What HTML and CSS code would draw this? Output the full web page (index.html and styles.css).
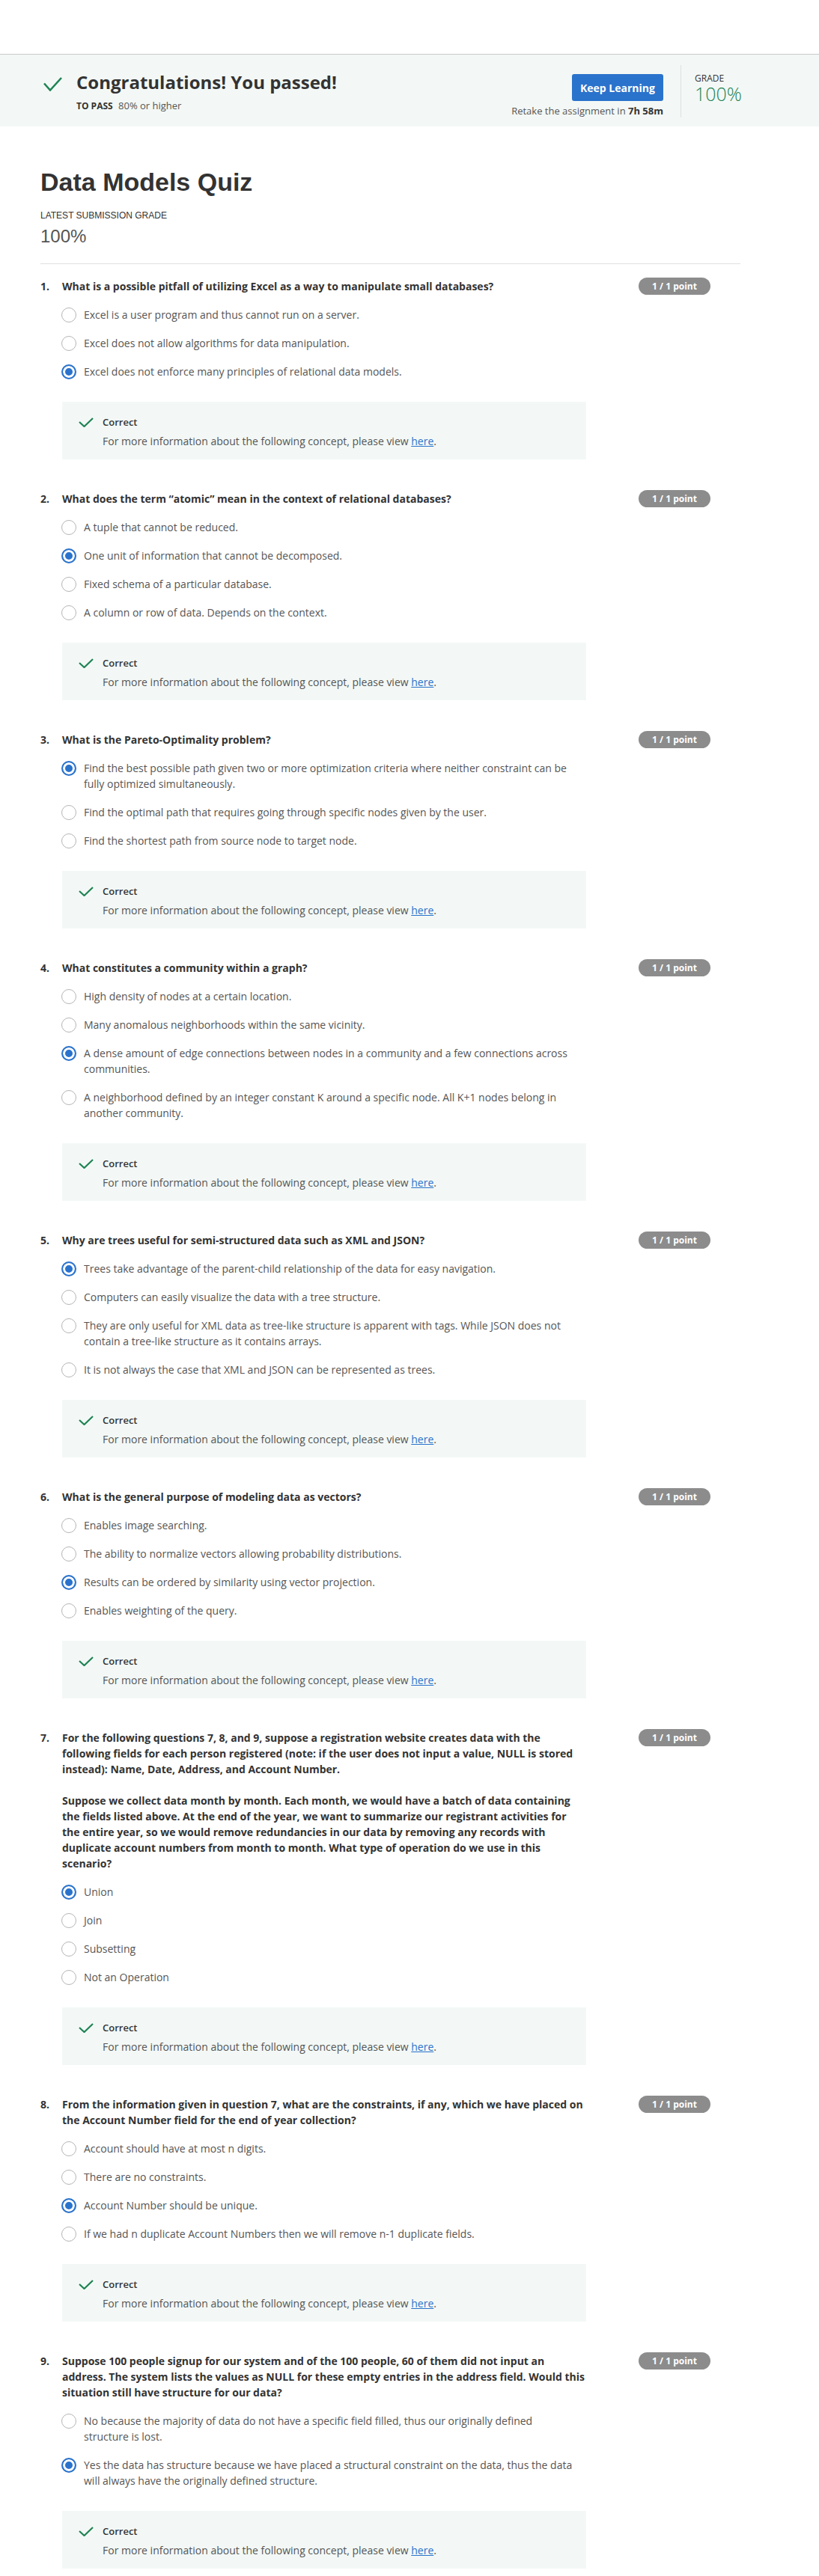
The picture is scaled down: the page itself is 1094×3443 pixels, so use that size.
FILE: index.html
```html
<!DOCTYPE html>
<html lang="en">
<head>
<meta charset="utf-8">
<title>Data Models Quiz</title>
<link rel="stylesheet" href="styles.css">
</head>
<body>
<div class="topbar"></div>
<div class="banner">
  <div class="banner-main">
    <svg class="banner-check" width="25" height="19" viewBox="0 0 25 19"><path d="M1 8.5 L9 17.5 L24 1" fill="none" stroke="#1f8354" stroke-width="2.6"/></svg>
    <div>
      <h2 class="banner-title">Congratulations! You passed!</h2>
      <div class="pass"><b>TO PASS</b> 80% or higher</div>
    </div>
  </div>
  <div class="actions">
    <button class="btn">Keep Learning</button>
    <div class="retake">Retake the assignment in <b>7h 58m</b></div>
  </div>
  <div class="grade">
    <div class="grade-label">GRADE</div>
    <div class="grade-value">100%</div>
  </div>
</div>

<main class="content">
  <h1 class="title">Data Models Quiz</h1>
  <div class="latest-label">LATEST SUBMISSION GRADE</div>
  <div class="latest-value">100%</div>
  <div class="divider"></div>

  <section class="question">
    <div class="q-head">
      <span class="q-num">1.</span>
      <div class="q-text">What is a possible pitfall of utilizing Excel as a way to manipulate small databases?</div>
      <span class="badge">1 / 1 point</span>
    </div>
    <ul class="options">
      <li class="option"><span class="radio"></span><span class="opt-text">Excel is a user program and thus cannot run on a server.</span></li>
      <li class="option"><span class="radio"></span><span class="opt-text">Excel does not allow algorithms for data manipulation.</span></li>
      <li class="option"><span class="radio checked"></span><span class="opt-text">Excel does not enforce many principles of relational data models.</span></li>
    </ul>
    <div class="feedback">
      <svg class="fb-check" width="20" height="13" viewBox="0 0 20 13"><path d="M1 6 L7.5 12 L19 1" fill="none" stroke="#1f8354" stroke-width="2.2"/></svg>
      <div>
        <div class="fb-title">Correct</div>
        <div class="fb-text">For more information about the following concept, please view <a href="#">here</a>.</div>
      </div>
    </div>
  </section>

  <section class="question">
    <div class="q-head">
      <span class="q-num">2.</span>
      <div class="q-text">What does the term “atomic” mean in the context of relational databases?</div>
      <span class="badge">1 / 1 point</span>
    </div>
    <ul class="options">
      <li class="option"><span class="radio"></span><span class="opt-text">A tuple that cannot be reduced.</span></li>
      <li class="option"><span class="radio checked"></span><span class="opt-text">One unit of information that cannot be decomposed.</span></li>
      <li class="option"><span class="radio"></span><span class="opt-text">Fixed schema of a particular database.</span></li>
      <li class="option"><span class="radio"></span><span class="opt-text">A column or row of data. Depends on the context.</span></li>
    </ul>
    <div class="feedback">
      <svg class="fb-check" width="20" height="13" viewBox="0 0 20 13"><path d="M1 6 L7.5 12 L19 1" fill="none" stroke="#1f8354" stroke-width="2.2"/></svg>
      <div>
        <div class="fb-title">Correct</div>
        <div class="fb-text">For more information about the following concept, please view <a href="#">here</a>.</div>
      </div>
    </div>
  </section>

  <section class="question">
    <div class="q-head">
      <span class="q-num">3.</span>
      <div class="q-text">What is the Pareto-Optimality problem?</div>
      <span class="badge">1 / 1 point</span>
    </div>
    <ul class="options">
      <li class="option"><span class="radio checked"></span><span class="opt-text">Find the best possible path given two or more optimization criteria where neither constraint can be fully optimized simultaneously.</span></li>
      <li class="option"><span class="radio"></span><span class="opt-text">Find the optimal path that requires going through specific nodes given by the user.</span></li>
      <li class="option"><span class="radio"></span><span class="opt-text">Find the shortest path from source node to target node.</span></li>
    </ul>
    <div class="feedback">
      <svg class="fb-check" width="20" height="13" viewBox="0 0 20 13"><path d="M1 6 L7.5 12 L19 1" fill="none" stroke="#1f8354" stroke-width="2.2"/></svg>
      <div>
        <div class="fb-title">Correct</div>
        <div class="fb-text">For more information about the following concept, please view <a href="#">here</a>.</div>
      </div>
    </div>
  </section>

  <section class="question">
    <div class="q-head">
      <span class="q-num">4.</span>
      <div class="q-text">What constitutes a community within a graph?</div>
      <span class="badge">1 / 1 point</span>
    </div>
    <ul class="options">
      <li class="option"><span class="radio"></span><span class="opt-text">High density of nodes at a certain location.</span></li>
      <li class="option"><span class="radio"></span><span class="opt-text">Many anomalous neighborhoods within the same vicinity.</span></li>
      <li class="option"><span class="radio checked"></span><span class="opt-text">A dense amount of edge connections between nodes in a community and a few connections across communities.</span></li>
      <li class="option"><span class="radio"></span><span class="opt-text">A neighborhood defined by an integer constant K around a specific node. All K+1 nodes belong in another community.</span></li>
    </ul>
    <div class="feedback">
      <svg class="fb-check" width="20" height="13" viewBox="0 0 20 13"><path d="M1 6 L7.5 12 L19 1" fill="none" stroke="#1f8354" stroke-width="2.2"/></svg>
      <div>
        <div class="fb-title">Correct</div>
        <div class="fb-text">For more information about the following concept, please view <a href="#">here</a>.</div>
      </div>
    </div>
  </section>

  <section class="question">
    <div class="q-head">
      <span class="q-num">5.</span>
      <div class="q-text">Why are trees useful for semi-structured data such as XML and JSON?</div>
      <span class="badge">1 / 1 point</span>
    </div>
    <ul class="options">
      <li class="option"><span class="radio checked"></span><span class="opt-text">Trees take advantage of the parent-child relationship of the data for easy navigation.</span></li>
      <li class="option"><span class="radio"></span><span class="opt-text">Computers can easily visualize the data with a tree structure.</span></li>
      <li class="option"><span class="radio"></span><span class="opt-text">They are only useful for XML data as tree-like structure is apparent with tags. While JSON does not contain a tree-like structure as it contains arrays.</span></li>
      <li class="option"><span class="radio"></span><span class="opt-text">It is not always the case that XML and JSON can be represented as trees.</span></li>
    </ul>
    <div class="feedback">
      <svg class="fb-check" width="20" height="13" viewBox="0 0 20 13"><path d="M1 6 L7.5 12 L19 1" fill="none" stroke="#1f8354" stroke-width="2.2"/></svg>
      <div>
        <div class="fb-title">Correct</div>
        <div class="fb-text">For more information about the following concept, please view <a href="#">here</a>.</div>
      </div>
    </div>
  </section>

  <section class="question">
    <div class="q-head">
      <span class="q-num">6.</span>
      <div class="q-text">What is the general purpose of modeling data as vectors?</div>
      <span class="badge">1 / 1 point</span>
    </div>
    <ul class="options">
      <li class="option"><span class="radio"></span><span class="opt-text">Enables image searching.</span></li>
      <li class="option"><span class="radio"></span><span class="opt-text">The ability to normalize vectors allowing probability distributions.</span></li>
      <li class="option"><span class="radio checked"></span><span class="opt-text">Results can be ordered by similarity using vector projection.</span></li>
      <li class="option"><span class="radio"></span><span class="opt-text">Enables weighting of the query.</span></li>
    </ul>
    <div class="feedback">
      <svg class="fb-check" width="20" height="13" viewBox="0 0 20 13"><path d="M1 6 L7.5 12 L19 1" fill="none" stroke="#1f8354" stroke-width="2.2"/></svg>
      <div>
        <div class="fb-title">Correct</div>
        <div class="fb-text">For more information about the following concept, please view <a href="#">here</a>.</div>
      </div>
    </div>
  </section>

  <section class="question">
    <div class="q-head">
      <span class="q-num">7.</span>
      <div class="q-text">
        <p class="q-para">For the following questions 7, 8, and 9, suppose a registration website creates data with the following fields for each person registered (note: if the user does not input a value, NULL is stored instead): Name, Date, Address, and Account Number.</p>
        <p class="q-para">Suppose we collect data month by month. Each month, we would have a batch of data containing the fields listed above. At the end of the year, we want to summarize our registrant activities for the entire year, so we would remove redundancies in our data by removing any records with duplicate account numbers from month to month. What type of operation do we use in this scenario?</p>
      </div>
      <span class="badge">1 / 1 point</span>
    </div>
    <ul class="options">
      <li class="option"><span class="radio checked"></span><span class="opt-text">Union</span></li>
      <li class="option"><span class="radio"></span><span class="opt-text">Join</span></li>
      <li class="option"><span class="radio"></span><span class="opt-text">Subsetting</span></li>
      <li class="option"><span class="radio"></span><span class="opt-text">Not an Operation</span></li>
    </ul>
    <div class="feedback">
      <svg class="fb-check" width="20" height="13" viewBox="0 0 20 13"><path d="M1 6 L7.5 12 L19 1" fill="none" stroke="#1f8354" stroke-width="2.2"/></svg>
      <div>
        <div class="fb-title">Correct</div>
        <div class="fb-text">For more information about the following concept, please view <a href="#">here</a>.</div>
      </div>
    </div>
  </section>

  <section class="question">
    <div class="q-head">
      <span class="q-num">8.</span>
      <div class="q-text">From the information given in question 7, what are the constraints, if any, which we have placed on the Account Number field for the end of year collection?</div>
      <span class="badge">1 / 1 point</span>
    </div>
    <ul class="options">
      <li class="option"><span class="radio"></span><span class="opt-text">Account should have at most n digits.</span></li>
      <li class="option"><span class="radio"></span><span class="opt-text">There are no constraints.</span></li>
      <li class="option"><span class="radio checked"></span><span class="opt-text">Account Number should be unique.</span></li>
      <li class="option"><span class="radio"></span><span class="opt-text">If we had n duplicate Account Numbers then we will remove n-1 duplicate fields.</span></li>
    </ul>
    <div class="feedback">
      <svg class="fb-check" width="20" height="13" viewBox="0 0 20 13"><path d="M1 6 L7.5 12 L19 1" fill="none" stroke="#1f8354" stroke-width="2.2"/></svg>
      <div>
        <div class="fb-title">Correct</div>
        <div class="fb-text">For more information about the following concept, please view <a href="#">here</a>.</div>
      </div>
    </div>
  </section>

  <section class="question">
    <div class="q-head">
      <span class="q-num">9.</span>
      <div class="q-text">Suppose 100 people signup for our system and of the 100 people, 60 of them did not input an address. The system lists the values as NULL for these empty entries in the address field. Would this situation still have structure for our data?</div>
      <span class="badge">1 / 1 point</span>
    </div>
    <ul class="options">
      <li class="option"><span class="radio"></span><span class="opt-text">No because the majority of data do not have a specific field filled, thus our originally defined structure is lost.</span></li>
      <li class="option"><span class="radio checked"></span><span class="opt-text">Yes the data has structure because we have placed a structural constraint on the data, thus the data will always have the originally defined structure.</span></li>
    </ul>
    <div class="feedback">
      <svg class="fb-check" width="20" height="13" viewBox="0 0 20 13"><path d="M1 6 L7.5 12 L19 1" fill="none" stroke="#1f8354" stroke-width="2.2"/></svg>
      <div>
        <div class="fb-title">Correct</div>
        <div class="fb-text">For more information about the following concept, please view <a href="#">here</a>.</div>
      </div>
    </div>
  </section>
</main>
</body>
</html>
```
FILE: styles.css
```css
* { box-sizing: border-box; }

body {
  margin: 0;
  font-family: "Open Sans", "Noto Sans", sans-serif;
  color: #333;
  background: #fff;
}

.topbar { height: 72px; }

.banner {
  border-top: 1px solid #c9c9c9;
  background: #f3f8f6;
  height: 97px;
  display: flex;
  padding: 0 66px 0 58px;
}

.banner-main {
  display: flex;
  gap: 19px;
  padding-top: 21px;
}

.banner-check { margin-top: 9px; flex: none; }

.banner-title {
  margin: 0;
  font-size: 24px;
  line-height: 32px;
  font-weight: 700;
  color: #333;
}

.pass {
  margin-top: 6px;
  font-size: 13px;
  line-height: 18px;
  color: #555;
}

.pass b {
  font-size: 12px;
  font-weight: 700;
  color: #333;
  margin-right: 4px;
}

.actions {
  margin-left: auto;
  padding-top: 26px;
  display: flex;
  flex-direction: column;
  align-items: flex-end;
}

.btn {
  width: 122px;
  height: 36px;
  border: 0;
  border-radius: 3px;
  background: #2a73cc;
  color: #fff;
  font-family: "Open Sans", sans-serif;
  font-size: 14px;
  font-weight: 700;
  padding: 0;
}

.retake {
  margin-top: 4px;
  font-size: 13px;
  line-height: 18px;
  color: #555;
}

.retake b { color: #333; }

.grade {
  margin: 14px 0 0 23px;
  border-left: 1px solid #e0e0e0;
  height: 70px;
  padding-left: 18px;
  width: 119px;
}

.grade-label {
  margin-top: 10px;
  font-size: 12px;
  line-height: 15px;
  color: #333;
}

.grade-value {
  font-size: 25px;
  line-height: 26px;
  font-weight: 300;
  color: #1f8354;
}

.content { padding: 0 54px 11px; }

.title {
  margin: 54px 0 0;
  font-family: "Liberation Sans", Arial, sans-serif;
  font-size: 34px;
  line-height: 40px;
  font-weight: 700;
  color: #333;
}

.latest-label {
  margin-top: 17px;
  font-family: "Liberation Sans", Arial, sans-serif;
  font-size: 12px;
  line-height: 16px;
  color: #333;
}

.latest-value {
  margin-top: 6px;
  font-family: "Liberation Sans", Arial, sans-serif;
  font-size: 24px;
  line-height: 28px;
  color: #555;
}

.divider {
  margin-top: 22px;
  width: 935px;
  border-top: 1px solid #e1e1e1;
}

.question { margin-top: 42px; }
.question:first-of-type { margin-top: 19px; }

.q-head {
  display: flex;
  align-items: flex-start;
}

.q-num {
  width: 29px;
  flex: none;
  font-size: 14px;
  line-height: 21px;
  font-weight: 700;
  color: #333;
}

.q-text {
  width: 700px;
  flex: none;
  font-size: 14px;
  line-height: 21px;
  font-weight: 700;
  color: #333;
}

.q-para { margin: 0; }
.q-para + .q-para { margin-top: 21px; }

.badge {
  margin: -1px 0 -3px 70px;
  width: 96px;
  height: 23px;
  border-radius: 12px;
  background: #8c8c8c;
  color: #fff;
  font-size: 12px;
  line-height: 23px;
  font-weight: 700;
  text-align: center;
  flex: none;
}

.options {
  list-style: none;
  margin: 0 0 0 28px;
  padding: 0;
}

.option {
  display: flex;
  gap: 10px;
  margin-top: 17px;
}

.radio {
  flex: none;
  width: 20px;
  height: 20px;
  margin-top: 0.5px;
  border-radius: 50%;
  border: 1.5px solid #b5b5b5;
  background: #fff;
}

.radio.checked {
  border: 2px solid #2a73cc;
  background: #2a73cc;
  box-shadow: inset 0 0 0 3px #fff;
}

.opt-text {
  width: 656px;
  font-size: 14px;
  line-height: 21px;
  color: #555;
}

.feedback {
  margin: 30px 0 0 29px;
  width: 700px;
  height: 77px;
  background: #f3f8f6;
  display: flex;
  gap: 12px;
  padding: 17px 0 0 22px;
}

.fb-check { flex: none; margin-top: 4px; }

.fb-title {
  font-size: 13px;
  line-height: 20px;
  font-weight: 600;
  color: #333;
}

.fb-text {
  margin-top: 5px;
  font-size: 14px;
  line-height: 21px;
  color: #555;
}

.fb-text a {
  color: #2a73cc;
  text-decoration: underline;
}
```
